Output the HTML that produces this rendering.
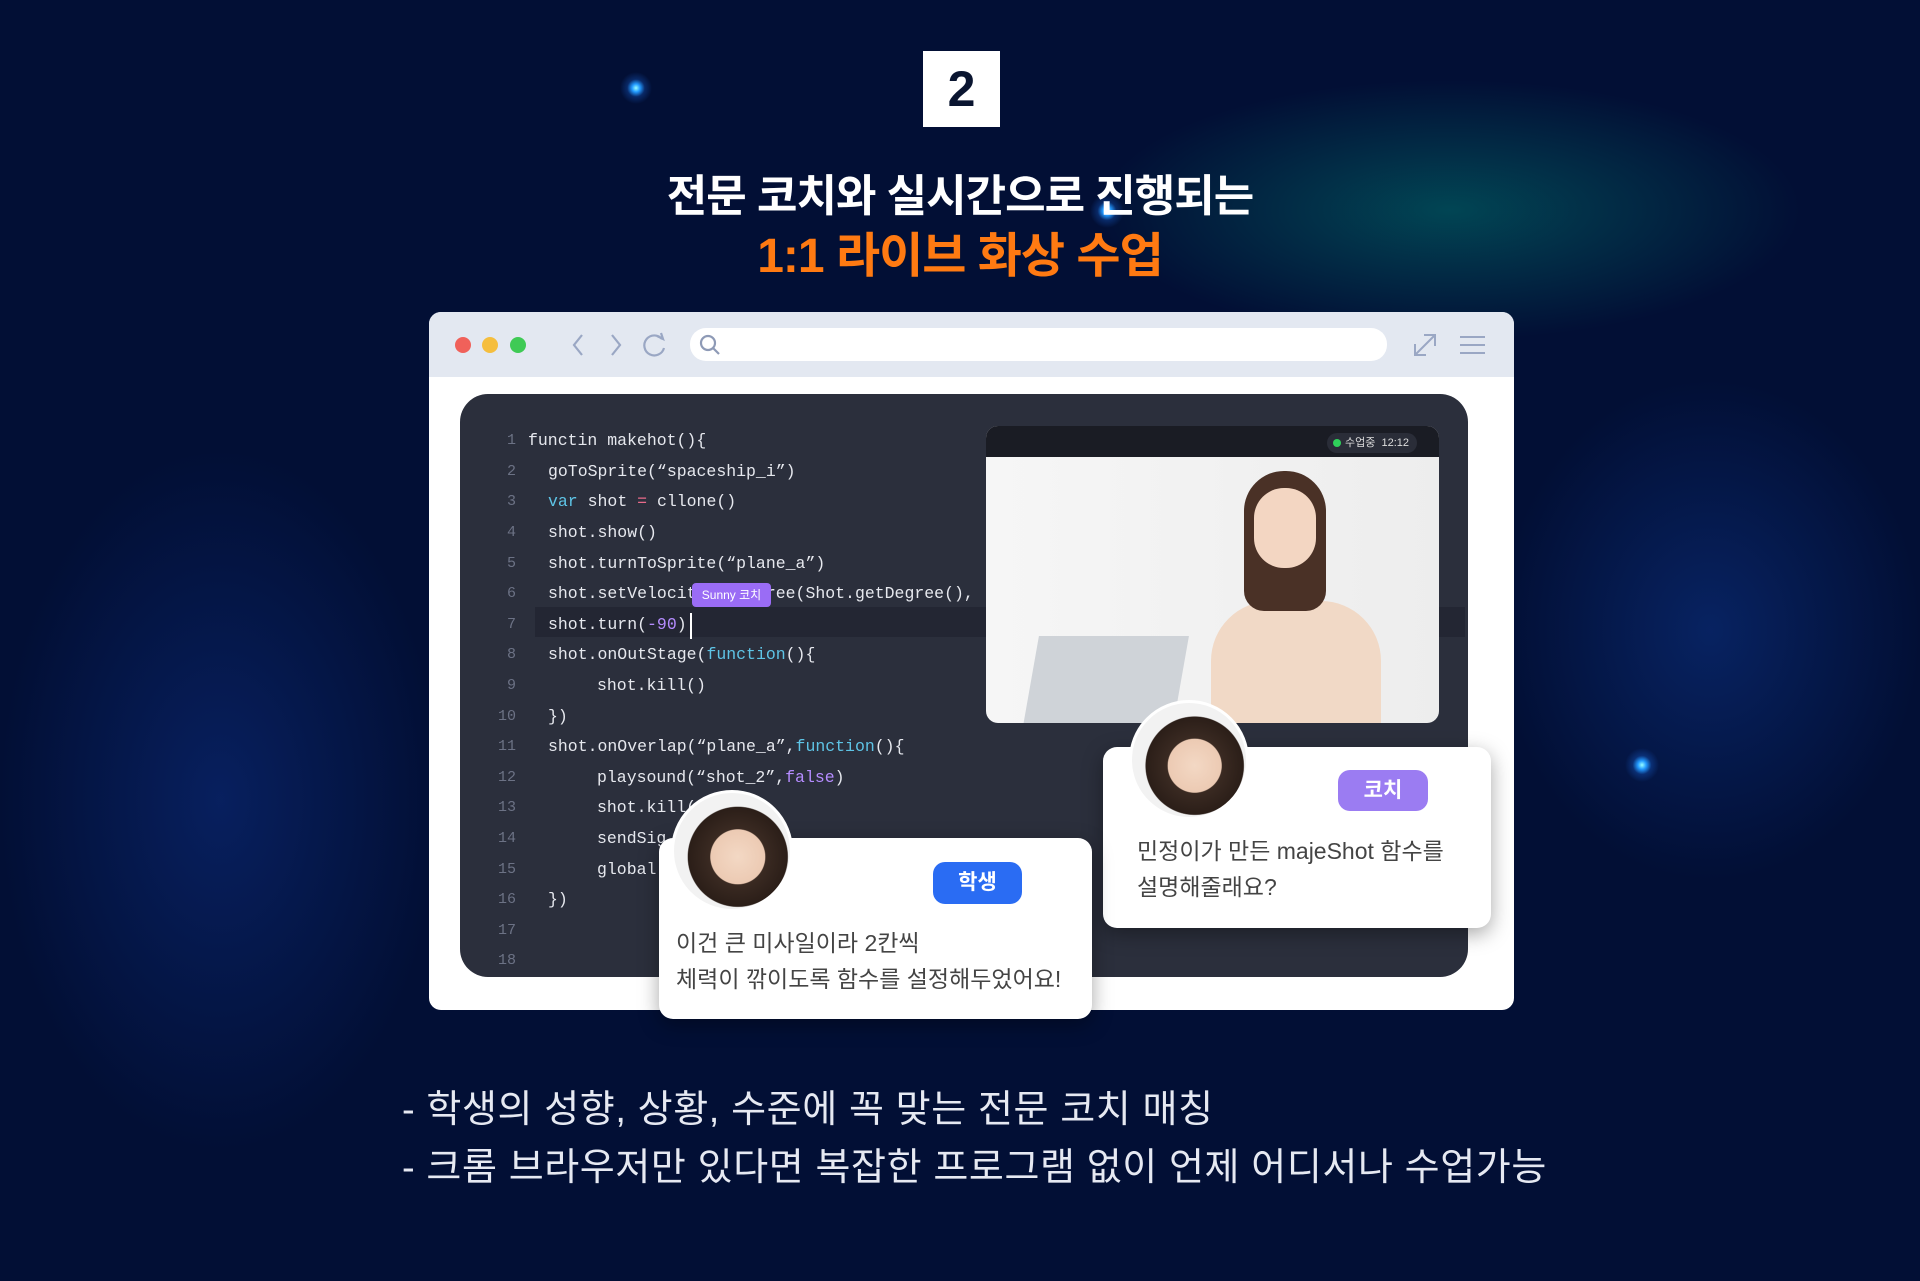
<!DOCTYPE html>
<html><head><meta charset="utf-8"><style>
*{margin:0;padding:0;box-sizing:border-box}
body{width:1920px;height:1281px;background:#020f35;position:relative;overflow:hidden;font-family:"Liberation Sans","Noto Sans CJK KR",sans-serif}
.abs{position:absolute}
.glow{position:absolute;border-radius:50%;background:radial-gradient(circle closest-side,#9ff 0,#29f 25%,rgba(30,120,255,.25) 55%,transparent 100%)}
.code{position:absolute;left:0;font-family:"Liberation Mono","Noto Sans CJK KR",monospace;font-size:16.5px;color:#e6e8ee;white-space:pre}
.ln{position:absolute;width:30px;text-align:right;left:486px;font-family:"Liberation Mono",monospace;font-size:15px;color:#6c7285}
.kw{color:#5ec4e6}.pu{color:#b58cff}.op{color:#e86a8a}
.bubble{position:absolute;background:#fff;border-radius:14px;box-shadow:0 6px 20px rgba(0,0,0,.35)}
.av{position:absolute;border-radius:50%;background:radial-gradient(circle at 55% 55%,#f3d8c4 0,#eccab3 30%,#3a2a22 31%,#2b1e18 55%,#f2f2f2 56%);border:3px solid #fff}
</style></head><body>
<div class="abs" style="left:1100px;top:80px;width:700px;height:260px;background:radial-gradient(closest-side,rgba(0,150,130,.4),transparent)"></div>
<div class="abs" style="left:1500px;top:380px;width:420px;height:500px;background:radial-gradient(closest-side,rgba(20,80,200,.3),transparent)"></div>
<div class="abs" style="left:0;top:450px;width:440px;height:700px;background:radial-gradient(closest-side,rgba(20,70,190,.3),transparent)"></div>
<div class="glow" style="left:620px;top:72px;width:32px;height:32px"></div>
<div class="glow" style="left:1090px;top:194px;width:34px;height:34px"></div>
<div class="glow" style="left:1625px;top:748px;width:34px;height:34px"></div>

<div class="abs" style="left:923px;top:51px;width:77px;height:76px;background:#fff;color:#0a1530;font-size:50px;font-weight:bold;text-align:center;line-height:76px">2</div>
<div class="abs" style="left:0;width:1920px;top:160px;text-align:center;color:#fff;font-size:44px;font-weight:bold;letter-spacing:-1px">전문 코치와 실시간으로 진행되는</div>
<div class="abs" style="left:0;width:1920px;top:216px;text-align:center;color:#ff7a12;font-size:48px;font-weight:bold;letter-spacing:-1px">1:1 라이브 화상 수업</div>

<div class="abs" style="left:429px;top:312px;width:1085px;height:698px;background:#fff;border-radius:12px;overflow:hidden">
 <div style="height:65px;background:#e3e8f1"></div>
</div>
<div class="abs" style="left:455px;top:337px;width:16px;height:16px;border-radius:50%;background:#f0615a"></div>
<div class="abs" style="left:482px;top:337px;width:16px;height:16px;border-radius:50%;background:#f5be3e"></div>
<div class="abs" style="left:510px;top:337px;width:16px;height:16px;border-radius:50%;background:#3fca55"></div>
<svg class="abs" style="left:565px;top:330px" width="110" height="30" fill="none" stroke="#9aa7c4" stroke-width="2.2"><path d="M17 5 L9 15 L17 25"/><path d="M47 5 L55 15 L47 25"/><path d="M97 9 A10 10 0 1 0 99 18"/><path d="M92 6 L98 9 L96 3"/></svg>
<div class="abs" style="left:690px;top:328px;width:697px;height:33px;background:#fff;border-radius:16px"></div>
<svg class="abs" style="left:698px;top:333px" width="24" height="24" fill="none" stroke="#8e9ab6" stroke-width="2.2"><circle cx="10" cy="10" r="7"/><path d="M15 15 L21 21"/></svg>
<svg class="abs" style="left:1410px;top:330px" width="110" height="30" fill="none" stroke="#9aa7c4" stroke-width="2"><path d="M5 25 L25 5 M14 5 H25 V16 M5 14 V25 H16"/><path d="M50 7 H75 M50 15 H75 M50 23 H75"/></svg>

<div class="abs" style="left:460px;top:394px;width:1008px;height:583px;background:#2b2f3c;border-radius:28px;overflow:hidden">
 <div class="abs" style="left:75px;top:213px;width:930px;height:30px;background:#232633"></div>
</div>
<div class="abs" style="left:0;top:0">
<div class="ln" style="top:432px">1</div><div class="ln" style="top:463px">2</div><div class="ln" style="top:493px">3</div><div class="ln" style="top:524px">4</div><div class="ln" style="top:555px">5</div><div class="ln" style="top:585px">6</div><div class="ln" style="top:616px">7</div><div class="ln" style="top:646px">8</div><div class="ln" style="top:677px">9</div><div class="ln" style="top:708px">10</div><div class="ln" style="top:738px">11</div><div class="ln" style="top:769px">12</div><div class="ln" style="top:799px">13</div><div class="ln" style="top:830px">14</div><div class="ln" style="top:861px">15</div><div class="ln" style="top:891px">16</div><div class="ln" style="top:922px">17</div><div class="ln" style="top:952px">18</div>
<div class="code" style="left:528px;top:431px">functin makehot(){</div>
<div class="code" style="left:548px;top:462px">goToSprite(“spaceship_i”)</div>
<div class="code" style="left:548px;top:492px"><span class="kw">var</span> shot <span class="op">=</span> cllone()</div>
<div class="code" style="left:548px;top:523px">shot.show()</div>
<div class="code" style="left:548px;top:554px">shot.turnToSprite(“plane_a”)</div>
<div class="code" style="left:548px;top:584px">shot.setVelocit       ree(Shot.getDegree(),</div>
<div class="code" style="left:548px;top:615px">shot.turn(<span class="pu">-90</span>)</div>
<div class="code" style="left:548px;top:645px">shot.onOutStage(<span class="kw">function</span>(){</div>
<div class="code" style="left:597px;top:676px">shot.kill()</div>
<div class="code" style="left:548px;top:707px">})</div>
<div class="code" style="left:548px;top:737px">shot.onOverlap(“plane_a”,<span class="kw">function</span>(){</div>
<div class="code" style="left:597px;top:768px">playsound(“shot_2”,<span class="pu">false</span>)</div>
<div class="code" style="left:597px;top:798px">shot.kill(</div>
<div class="code" style="left:597px;top:829px">sendSig</div>
<div class="code" style="left:597px;top:860px">global</div>
<div class="code" style="left:548px;top:890px">})</div>
</div>
<div class="abs" style="left:692px;top:583px;width:79px;height:24px;background:#9a6cf5;border-radius:4px;color:#fff;font-size:12px;line-height:24px;text-align:center">Sunny 코치</div>
<div class="abs" style="left:690px;top:613px;width:2px;height:26px;background:#fff"></div>

<div class="abs" style="left:986px;top:426px;width:453px;height:297px;border-radius:12px;overflow:hidden;background:linear-gradient(90deg,#f6f6f6,#ededed)">
 <div style="height:31px;background:#1a1c24"></div>
 <div class="abs" style="left:225px;top:175px;width:170px;height:130px;border-radius:60px 60px 0 0;background:#f1d9c6"></div>
 <div class="abs" style="left:258px;top:45px;width:82px;height:140px;border-radius:40px 40px 20px 20px;background:#4a3126"></div>
 <div class="abs" style="left:268px;top:62px;width:62px;height:80px;border-radius:30px;background:#f3d6c2"></div>
 <div class="abs" style="left:45px;top:210px;width:150px;height:90px;background:#cfd3d8;transform:skewX(-10deg)"></div>
</div>
<div class="abs" style="left:1327px;top:433px;width:90px;height:20px;background:#2a2d38;border-radius:10px;color:#ddd;font-size:11px;line-height:20px;padding-left:18px">수업중 &nbsp;12:12</div>
<div class="abs" style="left:1333px;top:439px;width:8px;height:8px;border-radius:50%;background:#2fd15a"></div>

<div class="bubble" style="left:1103px;top:747px;width:388px;height:181px"></div>
<div class="av" style="left:1129px;top:700px;width:120px;height:120px"></div>
<div class="abs" style="left:1338px;top:770px;width:90px;height:41px;background:#9b7cf2;border-radius:12px;color:#fff;font-size:21px;font-weight:bold;text-align:center;line-height:41px">코치</div>
<div class="abs" style="left:1137px;top:833px;color:#444;font-size:23px;line-height:36px">민정이가 만든 majeShot 함수를<br>설명해줄래요?</div>

<div class="bubble" style="left:659px;top:838px;width:433px;height:181px"></div>
<div class="av" style="left:671px;top:790px;width:122px;height:122px"></div>
<div class="abs" style="left:933px;top:862px;width:89px;height:42px;background:#2a6cf3;border-radius:12px;color:#fff;font-size:21px;font-weight:bold;text-align:center;line-height:42px">학생</div>
<div class="abs" style="left:676px;top:925px;color:#444;font-size:23px;line-height:36px">이건 큰 미사일이라 2칸씩<br>체력이 깎이도록 함수를 설정해두었어요!</div>

<div class="abs" style="left:402px;top:1081px;color:#e6e9f2;font-size:38px;line-height:58px;letter-spacing:0.6px;white-space:nowrap">- 학생의 성향, 상황, 수준에 꼭 맞는 전문 코치 매칭<br>- 크롬 브라우저만 있다면 복잡한 프로그램 없이 언제 어디서나 수업가능</div>
</body></html>
